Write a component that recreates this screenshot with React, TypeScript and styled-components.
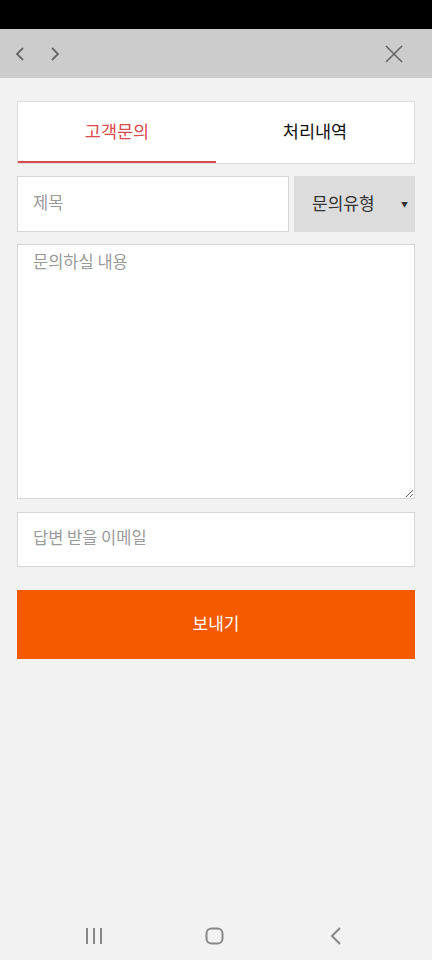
import { useState } from "react";
import styled, { createGlobalStyle } from "styled-components";

const GlobalStyle = createGlobalStyle`
  html, body {
    margin: 0;
    padding: 0;
    background-color: #f2f2f2;
    font-family: "Noto Sans CJK KR", "Noto Sans", sans-serif;
  }
  * {
    box-sizing: border-box;
  }
`;

const Page = styled.div`
  min-height: 960px;
  display: flex;
  flex-direction: column;
`;

const StatusBar = styled.div`
  height: 29px;
  background-color: #000;
`;

const TopBar = styled.div`
  height: 49px;
  background-color: #cccccc;
  display: flex;
  align-items: center;
  padding: 0 28px 0 10px;
`;

const NavGroup = styled.div`
  display: flex;
  align-items: center;
  gap: 15px;
  flex: 1;
`;

const IconButton = styled.button`
  width: 20px;
  height: 20px;
  padding: 0;
  border: none;
  background: none;
  display: flex;
  align-items: center;
  justify-content: center;
  color: #666;
`;

const Main = styled.div`
  padding: 23px 17px 0;
  display: flex;
  flex-direction: column;
`;

const TabCard = styled.div`
  height: 63px;
  background-color: #fff;
  border: 1px solid #dddddd;
  display: flex;
`;

const Tab = styled.div<{ $active?: boolean }>`
  flex: 1;
  display: flex;
  align-items: center;
  justify-content: center;
  font-size: 17.5px;
  padding-bottom: 3px;
  color: ${({ $active }) => ($active ? "#dc4a4f" : "#111")};
  border-bottom: 2px solid
    ${({ $active }) => ($active ? "#dc4a4f" : "transparent")};
`;

const Row = styled.div`
  margin-top: 12px;
  display: flex;
  gap: 5px;
  height: 56px;
`;

const TextInput = styled.input`
  flex: 1;
  min-width: 0;
  height: 100%;
  border: 1px solid #d6d6d6;
  background: #fff;
  padding: 0 15px 5px;
  font-family: inherit;
  font-size: 16.5px;
  color: #333;
  outline: none;
  &::placeholder {
    color: #9a9a9a;
  }
`;

const TypeSelect = styled.div`
  width: 121px;
  height: 100%;
  background-color: #dcdcdc;
  display: flex;
  align-items: center;
  justify-content: space-between;
  padding: 0 7px 4px 18px;
  font-size: 17px;
  color: #333;
`;

const Caret = styled.span`
  font-size: 7px;
  color: #333;
  padding-top: 3px;
`;

const ContentArea = styled.textarea`
  margin-top: 12px;
  height: 255px;
  border: 1px solid #d6d6d6;
  background: #fff;
  padding: 4px 15px;
  font-family: inherit;
  font-size: 16.5px;
  color: #333;
  resize: vertical;
  outline: none;
  &::placeholder {
    color: #9a9a9a;
  }
`;

const EmailInput = styled(TextInput)`
  flex: none;
  margin-top: 13px;
  height: 55px;
`;

const SendButton = styled.button`
  margin-top: 23px;
  height: 69px;
  border: none;
  background-color: #f55a00;
  color: #fff;
  font-family: inherit;
  font-size: 17px;
  padding-bottom: 6px;
`;

const BottomNav = styled.div`
  margin-top: auto;
  height: 48px;
  display: grid;
  grid-template-columns: repeat(3, 1fr);
  align-items: center;
  padding: 0 36px 0 33px;
  color: #888;
`;

const NavSlot = styled.div`
  display: flex;
  justify-content: center;
`;

const App = () => {
  const [tab, setTab] = useState(0);
  return (
    <>
      <GlobalStyle />
      <Page>
        <StatusBar />
        <TopBar>
          <NavGroup>
            <IconButton>
              <svg width="12" height="16" viewBox="0 0 12 16">
                <path d="M9 2 L3 8 L9 14" fill="none" stroke="currentColor" strokeWidth="1.8" />
              </svg>
            </IconButton>
            <IconButton>
              <svg width="12" height="16" viewBox="0 0 12 16">
                <path d="M3 2 L9 8 L3 14" fill="none" stroke="currentColor" strokeWidth="1.8" />
              </svg>
            </IconButton>
          </NavGroup>
          <IconButton>
            <svg width="18" height="18" viewBox="0 0 18 18">
              <path d="M1 1 L17 17 M17 1 L1 17" fill="none" stroke="currentColor" strokeWidth="1.6" />
            </svg>
          </IconButton>
        </TopBar>
        <Main>
          <TabCard>
            <Tab $active={tab === 0} onClick={() => setTab(0)}>
              고객문의
            </Tab>
            <Tab $active={tab === 1} onClick={() => setTab(1)}>
              처리내역
            </Tab>
          </TabCard>
          <Row>
            <TextInput placeholder="제목" />
            <TypeSelect>
              문의유형
              <Caret>▼</Caret>
            </TypeSelect>
          </Row>
          <ContentArea placeholder="문의하실 내용" />
          <EmailInput placeholder="답변 받을 이메일" />
          <SendButton>보내기</SendButton>
        </Main>
        <BottomNav>
          <NavSlot>
            <svg width="18" height="18" viewBox="0 0 18 18">
              <path d="M2 1 V17 M9 1 V17 M16 1 V17" stroke="currentColor" strokeWidth="2" />
            </svg>
          </NavSlot>
          <NavSlot>
            <svg width="19" height="18" viewBox="0 0 19 18">
              <rect x="1.5" y="1.5" width="16" height="15" rx="5" fill="none" stroke="currentColor" strokeWidth="2" />
            </svg>
          </NavSlot>
          <NavSlot>
            <svg width="12" height="18" viewBox="0 0 12 18">
              <path d="M10 1 L2 9 L10 17" fill="none" stroke="currentColor" strokeWidth="2" />
            </svg>
          </NavSlot>
        </BottomNav>
      </Page>
    </>
  );
};

export default App;
